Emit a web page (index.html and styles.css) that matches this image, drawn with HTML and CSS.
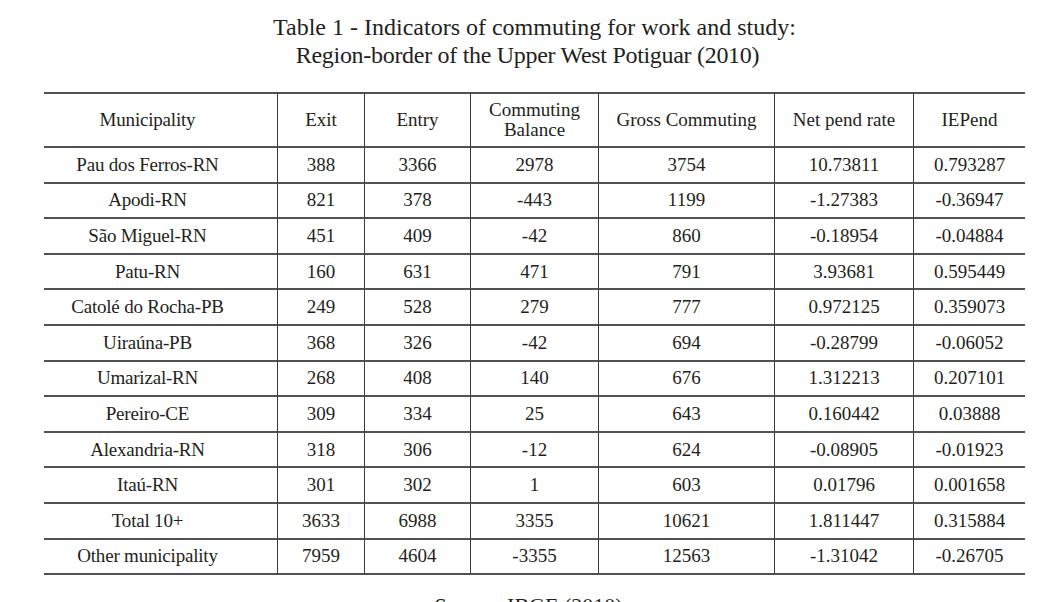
FILE: index.html
```html
<!DOCTYPE html>
<html lang="en">
<head>
<meta charset="utf-8">
<title>Table 1 - Indicators of commuting</title>
<link rel="stylesheet" href="styles.css">
</head>
<body>
<div class="page">
  <h1 class="caption"><span class="cap-line">Table 1 - Indicators of commuting for work and study:</span><span class="cap-line cap-line-2">Region-border of the Upper West Potiguar (2010)</span></h1>
  <table class="data">
    <colgroup>
      <col class="c-muni"><col class="c-exit"><col class="c-entry"><col class="c-bal"><col class="c-gross"><col class="c-net"><col class="c-iep">
    </colgroup>
    <thead>
      <tr>
        <th>Municipality</th><th>Exit</th><th>Entry</th><th>Commuting<br>Balance</th><th>Gross Commuting</th><th>Net pend rate</th><th>IEPend</th>
      </tr>
    </thead>
    <tbody>
      <tr><td>Pau dos Ferros-RN</td><td>388</td><td>3366</td><td>2978</td><td>3754</td><td>10.73811</td><td>0.793287</td></tr>
      <tr><td>Apodi-RN</td><td>821</td><td>378</td><td>-443</td><td>1199</td><td>-1.27383</td><td>-0.36947</td></tr>
      <tr><td>São Miguel-RN</td><td>451</td><td>409</td><td>-42</td><td>860</td><td>-0.18954</td><td>-0.04884</td></tr>
      <tr><td>Patu-RN</td><td>160</td><td>631</td><td>471</td><td>791</td><td>3.93681</td><td>0.595449</td></tr>
      <tr><td>Catolé do Rocha-PB</td><td>249</td><td>528</td><td>279</td><td>777</td><td>0.972125</td><td>0.359073</td></tr>
      <tr><td>Uiraúna-PB</td><td>368</td><td>326</td><td>-42</td><td>694</td><td>-0.28799</td><td>-0.06052</td></tr>
      <tr><td>Umarizal-RN</td><td>268</td><td>408</td><td>140</td><td>676</td><td>1.312213</td><td>0.207101</td></tr>
      <tr><td>Pereiro-CE</td><td>309</td><td>334</td><td>25</td><td>643</td><td>0.160442</td><td>0.03888</td></tr>
      <tr><td>Alexandria-RN</td><td>318</td><td>306</td><td>-12</td><td>624</td><td>-0.08905</td><td>-0.01923</td></tr>
      <tr><td>Itaú-RN</td><td>301</td><td>302</td><td>1</td><td>603</td><td>0.01796</td><td>0.001658</td></tr>
      <tr><td>Total 10+</td><td>3633</td><td>6988</td><td>3355</td><td>10621</td><td>1.811447</td><td>0.315884</td></tr>
      <tr><td>Other municipality</td><td>7959</td><td>4604</td><td>-3355</td><td>12563</td><td>-1.31042</td><td>-0.26705</td></tr>
    </tbody>
  </table>
  <p class="source">Source: IBGE (2010)</p>
</div>
</body>
</html>
```

FILE: styles.css
```css
html, body {
  margin: 0;
  padding: 0;
  background: #ffffff;
  overflow: hidden;
}

body {
  font-family: "Liberation Serif", "Times New Roman", serif;
  color: #231f20;
}

.page {
  width: 981px;
  margin-left: 44px;
}

.caption {
  margin: 13px 0 0;
  font-size: 24px;
  line-height: 28px;
  font-weight: normal;
  text-align: center;
}

.cap-line {
  display: block;
}

.cap-line-2 {
  letter-spacing: -0.3px;
  padding-right: 14px;
}

.data {
  margin-top: 23px;
  width: 981px;
  border-collapse: separate;
  border-spacing: 0;
  table-layout: fixed;
  font-size: 19px;
  line-height: 20px;
}

.c-muni { width: 233px; }
.c-exit { width: 87px; }
.c-entry { width: 106px; }
.c-bal { width: 128px; }
.c-gross { width: 176px; }
.c-net { width: 139px; }
.c-iep { width: 112px; }

.data th,
.data td {
  padding: 0;
  text-align: center;
  vertical-align: middle;
  font-weight: normal;
  border-bottom: 2px solid #525252;
}

.data th:first-child,
.data td:first-child {
  padding-right: 26px;
  letter-spacing: -0.2px;
}

.data th + th,
.data td + td {
  border-left: 1px solid #3a3a3a;
}

.data th {
  border-top: 2px solid #525252;
}

.data thead tr {
  height: 56px;
}

.data tbody tr {
  height: 35.6px;
}

.source {
  margin: 18px 0 0;
  padding-right: 12px;
  font-size: 22px;
  line-height: 26px;
  text-align: center;
}
```
